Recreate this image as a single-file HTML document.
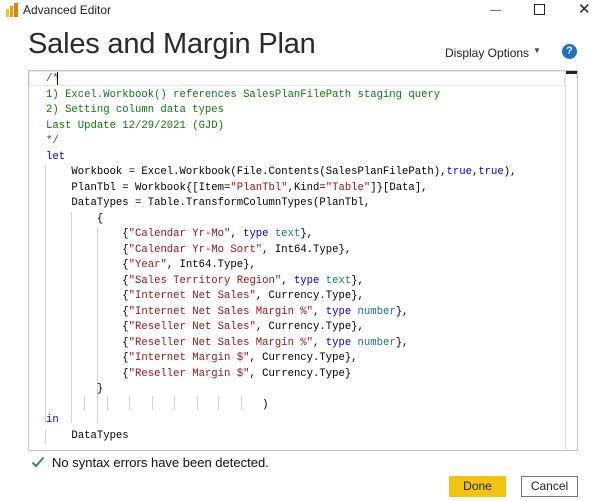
<!DOCTYPE html>
<html><head><meta charset="utf-8"><style>
body{margin:0;width:598px;height:501px;background:#fff;position:relative;overflow:hidden;font-family:"Liberation Sans",sans-serif}
.a{position:absolute}
.ed{position:absolute;left:28px;top:70px;width:550px;height:381px;border:1px solid #c8c8c8;box-sizing:border-box}
.code{position:absolute;left:46px;top:72px;font-family:"Liberation Mono",monospace;font-size:10.6px;line-height:15.5px;white-space:pre;color:#000}
.c{color:#0f7a0f}.k{color:#0000ff}.s{color:#a31515}.t{color:#1b7a7a}
.g{position:absolute;width:1px;background:#d6d6d6}
</style></head><body>
<svg class="a" style="left:5px;top:3px" width="14" height="15"><rect x="1" y="6" width="3" height="8" fill="#f2c811"/><rect x="5" y="3" width="3" height="11" fill="#e8a10e"/><rect x="9" y="0" width="4" height="14" fill="#d4870a"/></svg>
<div class="a" style="left:23px;top:3px;font-size:12px;color:#222">Advanced Editor</div>
<div class="a" style="left:490px;top:10px;width:11px;height:1px;background:#777"></div>
<div class="a" style="left:534px;top:4px;width:9px;height:9px;border:1px solid #222"></div>
<div class="a" style="left:578px;top:0px;font-size:15px;color:#222">✕</div>
<div class="a" style="left:28px;top:28px;font-size:29px;color:#2a2a2a;letter-spacing:-0.2px">Sales and Margin Plan</div>
<div class="a" style="left:445px;top:46px;font-size:12px;color:#222">Display Options</div>
<div class="a" style="left:533px;top:46px;font-size:8px;color:#444">▼</div>
<div class="a" style="left:562px;top:44px;width:15px;height:15px;border-radius:50%;background:#1f6fc5;color:#fff;font-size:11px;font-weight:bold;text-align:center;line-height:15px">?</div>
<div class="ed"></div>
<div class="a" style="left:29px;top:71px;width:536px;height:15px;border:1px solid #e6e6e6;box-sizing:border-box"></div>
<div class="a" style="left:565px;top:71px;width:1px;height:379px;background:#e0e0e0"></div>
<div class="a" style="left:566px;top:71px;width:11px;height:3px;background:#222"></div>
<div class="a" style="left:57px;top:72px;width:1px;height:13px;background:#000"></div>
<div class="g" style="left:45px;top:165px;height:258px"></div>
<div class="g" style="left:71px;top:212px;height:211px"></div>
<div class="g" style="left:97px;top:227px;height:196px"></div>
<div class="g" style="left:45px;top:430px;height:14px"></div>
<div class="g" style="left:84px;top:396px;height:14px"></div>
<div class="g" style="left:107px;top:396px;height:14px"></div>
<div class="g" style="left:129px;top:396px;height:14px"></div>
<div class="g" style="left:152px;top:396px;height:14px"></div>
<div class="g" style="left:174px;top:396px;height:14px"></div>
<div class="g" style="left:197px;top:396px;height:14px"></div>
<div class="g" style="left:218px;top:396px;height:14px"></div>
<div class="g" style="left:241px;top:396px;height:14px"></div>
<div class="code"><span class="c">/*
1) Excel.Workbook() references SalesPlanFilePath staging query
2) Setting column data types
Last Update 12/29/2021 (GJD)
*/</span>
<span class="k">let</span>
    Workbook = Excel.Workbook(File.Contents(SalesPlanFilePath),<span class="k">true</span>,<span class="k">true</span>),
    PlanTbl = Workbook{[Item=<span class="s">"PlanTbl"</span>,Kind=<span class="s">"Table"</span>]}[Data],
    DataTypes = Table.TransformColumnTypes(PlanTbl,
        {
            {<span class="s">"Calendar Yr-Mo"</span>, <span class="k">type</span> <span class="t">text</span>},
            {<span class="s">"Calendar Yr-Mo Sort"</span>, Int64.Type},
            {<span class="s">"Year"</span>, Int64.Type},
            {<span class="s">"Sales Territory Region"</span>, <span class="k">type</span> <span class="t">text</span>},
            {<span class="s">"Internet Net Sales"</span>, Currency.Type},
            {<span class="s">"Internet Net Sales Margin %"</span>, <span class="k">type</span> <span class="t">number</span>},
            {<span class="s">"Reseller Net Sales"</span>, Currency.Type},
            {<span class="s">"Reseller Net Sales Margin %"</span>, <span class="k">type</span> <span class="t">number</span>},
            {<span class="s">"Internet Margin $"</span>, Currency.Type},
            {<span class="s">"Reseller Margin $"</span>, Currency.Type}
        }
                                  )
<span class="k">in</span>
    DataTypes</div>
<svg class="a" style="left:31px;top:456px" width="14" height="12"><path d="M1.5 6.5 L5 10 L12.5 1.5" stroke="#2e8b57" stroke-width="2" fill="none"/></svg>
<div class="a" style="left:52px;top:455px;font-size:13px;color:#111">No syntax errors have been detected.</div>
<div class="a" style="left:449px;top:476px;width:57px;height:21px;background:#f2c40f;font-size:12px;color:#222;text-align:center;line-height:21px">Done</div>
<div class="a" style="left:521px;top:476px;width:57px;height:21px;border:1px solid #777;box-sizing:border-box;font-size:12px;color:#222;text-align:center;line-height:19px">Cancel</div>
</body></html>
